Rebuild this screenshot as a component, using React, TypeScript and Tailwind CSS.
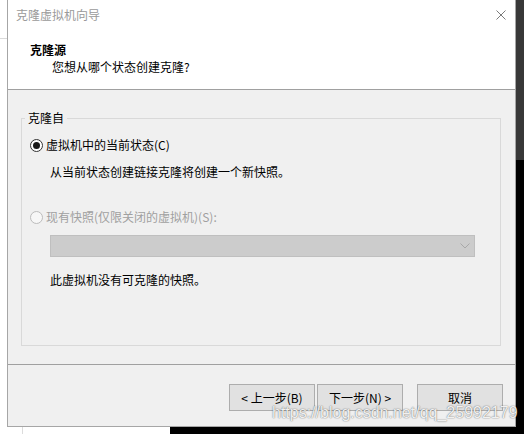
import React from "react";

function Radio({ checked, disabled }: { checked?: boolean; disabled?: boolean }) {
  return (
    <span
      className={
        disabled
          ? "w-[13px] h-[13px] rounded-full border border-[#bcbcbc] bg-[#f7f7f7] flex items-center justify-center shrink-0"
          : "w-[13px] h-[13px] rounded-full border border-[#333333] bg-white flex items-center justify-center shrink-0"
      }
    >
      {checked && <span className="w-[7px] h-[7px] rounded-full bg-[#1a1a1a]" />}
    </span>
  );
}

function Btn({ children }: { children: React.ReactNode }) {
  return (
    <button className="w-[86px] h-[27px] bg-[#e1e1e1] border border-[#adadad] text-[12px] leading-4 text-black flex items-center justify-center">
      {children}
    </button>
  );
}

export default function App() {
  return (
    <div className="relative w-[524px] h-[434px] overflow-hidden flex flex-col bg-black font-['Noto_Sans_CJK_SC',sans-serif] text-[12px] leading-4 text-black">
      <div className="flex h-[427px]">
        {/* left outside strip */}
        <div className="w-[7px] bg-white flex flex-col">
          <div className="h-[38px]" />
          <div className="h-px bg-[#dadada]" />
        </div>

        {/* dialog */}
        <div className="w-[509px] flex flex-col border-x border-b border-[#a6a6a6] bg-[#f0f0f0]">
          {/* header */}
          <div className="h-[90px] bg-white border-b border-[#a0a0a0] flex flex-col">
            <div className="h-[30px] flex items-center justify-between pl-2 pr-[9px]">
              <span className="text-[#9a9a9a]">克隆虚拟机向导</span>
              <svg width="10" height="10" viewBox="0 0 10 10">
                <path d="M0.5 0.5 L9.5 9.5 M9.5 0.5 L0.5 9.5" stroke="#7a7a7a" strokeWidth="1" fill="none" />
              </svg>
            </div>
            <div className="mt-[12px] pl-[22px] font-bold">克隆源</div>
            <div className="mt-px pl-[44px]">您想从哪个状态创建克隆?</div>
          </div>

          {/* body */}
          <div className="h-[274px] pt-[20px]">
            <fieldset className="ml-[13px] w-[480px] h-[236px] border border-[#d9d9d9] p-0 m-0 flex flex-col">
              <legend className="ml-[3px] px-[3px] leading-4">克隆自</legend>
              <div className="mt-[11px] ml-[8px] h-4 flex items-center gap-[3px]">
                <Radio checked />
                <span>虚拟机中的当前状态(C)</span>
              </div>
              <div className="mt-[11px] pl-[28px]">从当前状态创建链接克隆将创建一个新快照。</div>
              <div className="mt-[29px] ml-[8px] h-4 flex items-center gap-[3px]">
                <Radio disabled />
                <span className="text-[#a0a0a0]">现有快照(仅限关闭的虚拟机)(S):</span>
              </div>
              <div className="mt-[10px] ml-[28px] w-[425px] h-[22px] bg-[#cccccc] border border-[#bfbfbf] flex items-center justify-end pr-[4px]">
                <svg width="10" height="6" viewBox="0 0 10 6">
                  <path d="M0.5 0.5 L5 5 L9.5 0.5" stroke="#a8a8a8" strokeWidth="1" fill="none" />
                </svg>
              </div>
              <div className="mt-[15px] pl-[28px]">此虚拟机没有可克隆的快照。</div>
            </fieldset>
          </div>

          {/* footer */}
          <div className="h-[62px] border-t border-[#a0a0a0] pt-[19px] pr-[12px] flex justify-end">
            <div className="flex gap-[2px]">
              <Btn>&lt; 上一步(B)</Btn>
              <Btn>下一步(N) &gt;</Btn>
            </div>
            <div className="ml-[14px]">
              <Btn>取消</Btn>
            </div>
          </div>
        </div>

        {/* right outside strip */}
        <div className="w-[8px] flex flex-col">
          <div className="h-[160px] bg-[#383838]" />
          <div className="flex-1 bg-black" />
        </div>
      </div>

      {/* bottom outside strip */}
      <div className="flex h-[7px]">
        <div className="w-[170px] bg-white pl-[22px]">
          <div className="w-px h-full bg-[#dcdcdc]" />
        </div>
        <div className="flex-1 bg-black" />
      </div>

      {/* watermark */}
      <div className="absolute left-[272px] top-[404px] font-['Liberation_Sans',Arial,sans-serif] text-[16px] leading-[18px] text-white/90 [text-shadow:0_0_1px_rgba(0,0,0,0.55),0_0_2px_rgba(0,0,0,0.25)] whitespace-nowrap">
        https://blog.csdn.net/qq_25992179
      </div>
    </div>
  );
}
